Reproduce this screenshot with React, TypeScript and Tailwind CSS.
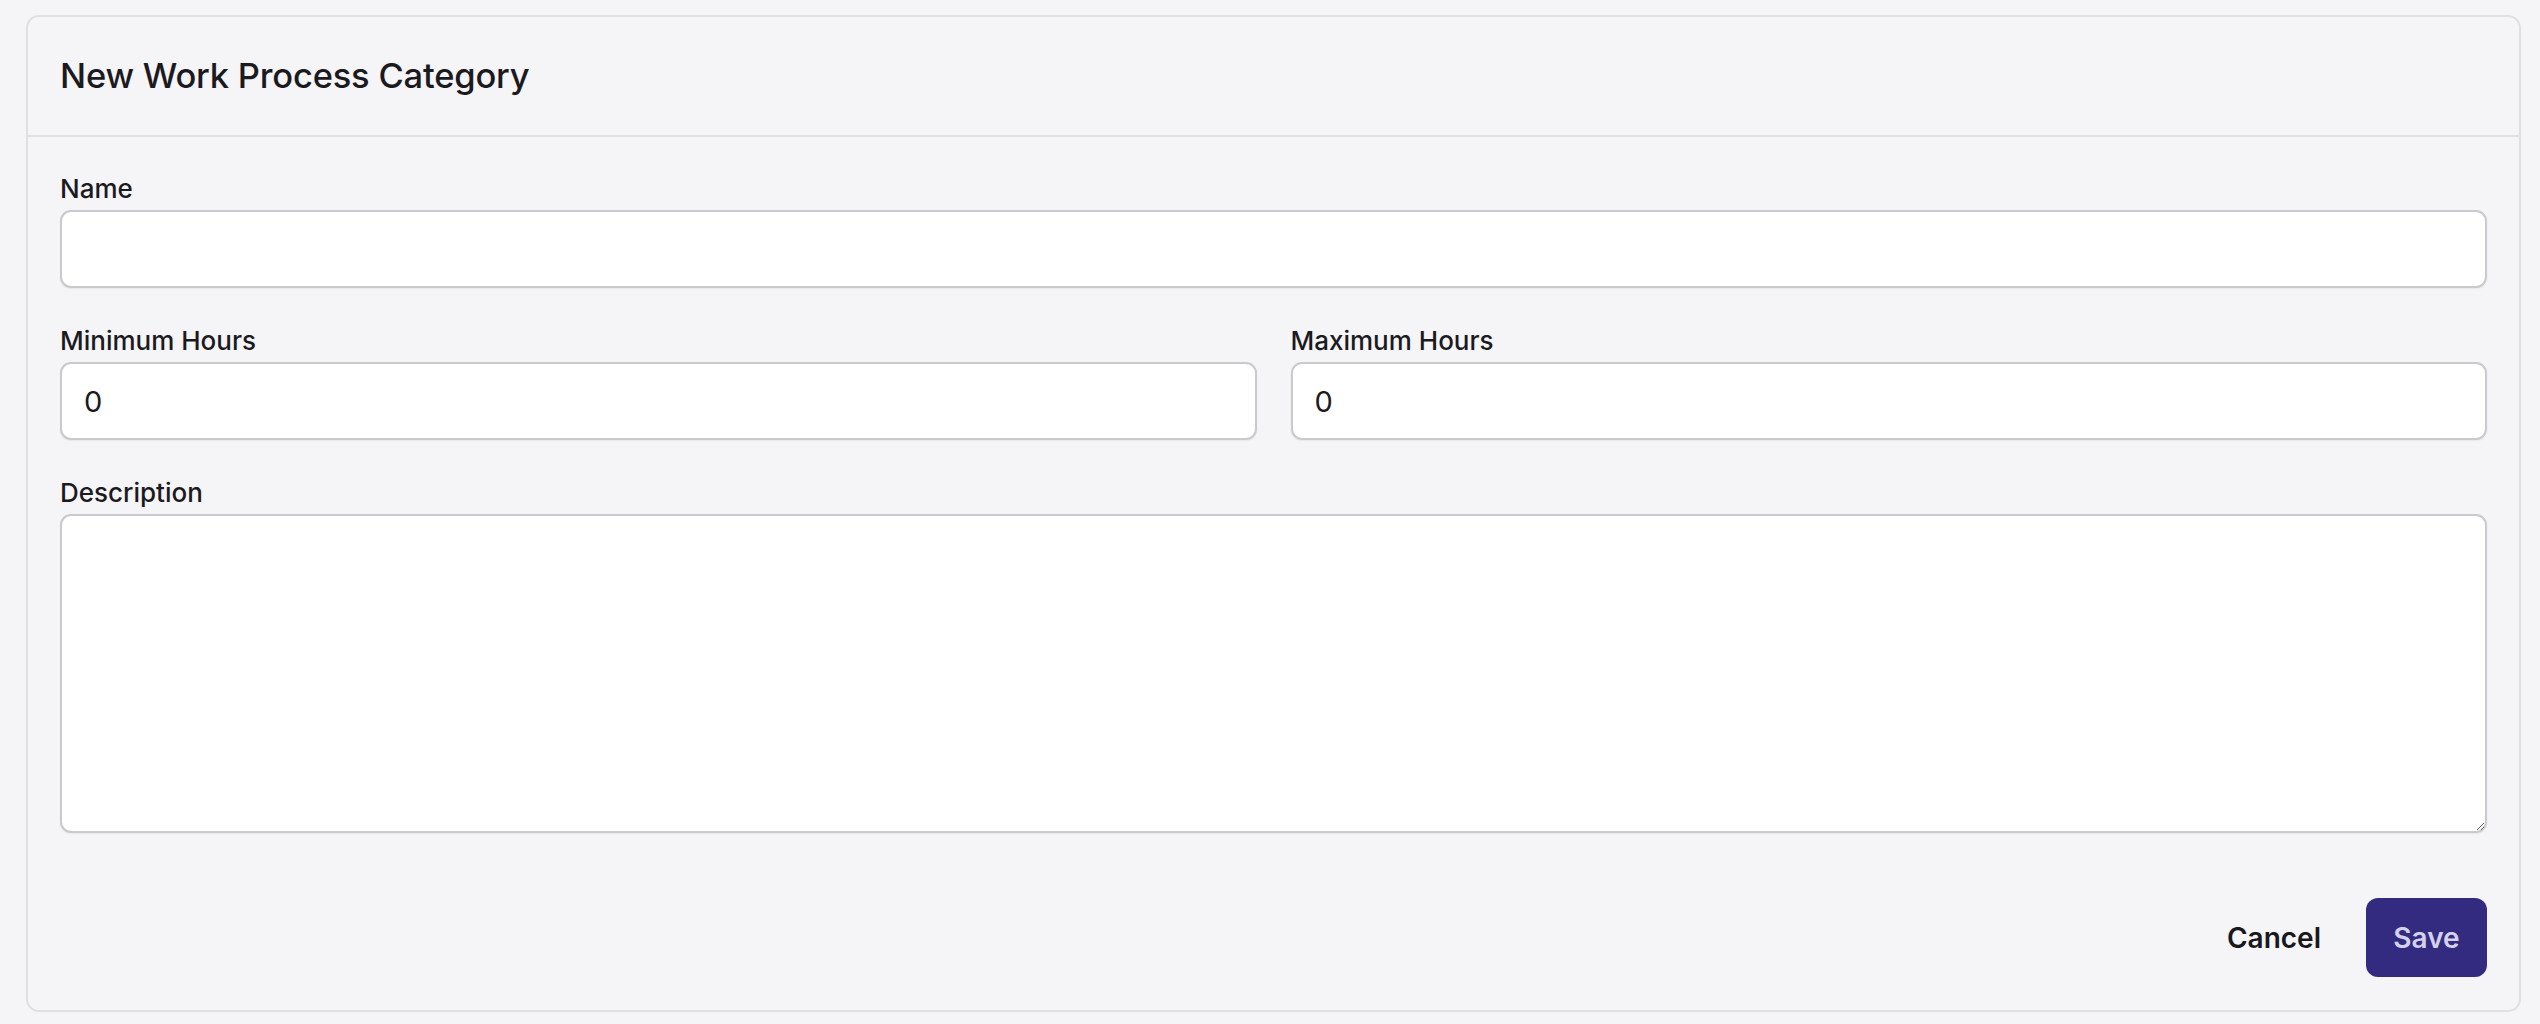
import React from "react";

export default function App() {
  const font = { fontFamily: "Inter, 'Noto Sans', sans-serif" };
  return (
    <div className="min-h-[1024px] w-full bg-[#f5f4f7] pl-[26px] pr-[19px] pt-[15px] text-[#1b1a1f]" style={font}>
      <div className="rounded-[13px] border-2 border-[#e0dfe3] bg-[#f5f4f7]">
        <div className="flex h-[120px] items-center border-b-2 border-[#e0dfe3] px-[32px]">
          <h1 className="text-[34.5px] font-medium leading-none tracking-[-0.2px]">New Work Process Category</h1>
        </div>
        <div className="flex flex-col px-[32px] pb-[33px] pt-[36px]">
          <div className="flex flex-col">
            <label className="mb-[5px] text-[26px] font-medium leading-[32px]">Name</label>
            <input
              type="text"
              className="h-[78px] rounded-[11px] border-2 border-[#cac9ce] bg-white px-[22px] text-[29px] shadow-[0_1px_2px_rgba(0,0,0,0.06)] outline-none"
            />
          </div>
          <div className="mt-[37px] grid grid-cols-2 gap-[34px]">
            <div className="flex flex-col">
              <label className="mb-[5px] text-[26px] font-medium leading-[32px]">Minimum Hours</label>
              <input
                type="text"
                defaultValue="0"
                className="h-[78px] rounded-[11px] border-2 border-[#cac9ce] bg-white px-[22px] text-[29px] shadow-[0_1px_2px_rgba(0,0,0,0.06)] outline-none"
              />
            </div>
            <div className="flex flex-col">
              <label className="mb-[5px] text-[26px] font-medium leading-[32px]">Maximum Hours</label>
              <input
                type="text"
                defaultValue="0"
                className="h-[78px] rounded-[11px] border-2 border-[#cac9ce] bg-white px-[22px] text-[29px] shadow-[0_1px_2px_rgba(0,0,0,0.06)] outline-none"
              />
            </div>
          </div>
          <div className="mt-[37px] flex flex-col">
            <label className="mb-[5px] text-[26px] font-medium leading-[32px]">Description</label>
            <textarea
              className="h-[319px] resize-y rounded-[11px] border-2 border-[#cac9ce] bg-white px-[22px] py-[16px] text-[29px] shadow-[0_1px_2px_rgba(0,0,0,0.06)] outline-none"
            />
          </div>
          <div className="mt-[65px] flex items-center justify-end gap-[45px]">
            <button className="text-[28px] font-semibold leading-none text-[#19181c]">Cancel</button>
            <button className="flex h-[79px] w-[121px] items-center justify-center rounded-[12px] bg-[#332b80] text-[28px] font-semibold leading-none text-[#d3d1ec]">
              Save
            </button>
          </div>
        </div>
      </div>
    </div>
  );
}
